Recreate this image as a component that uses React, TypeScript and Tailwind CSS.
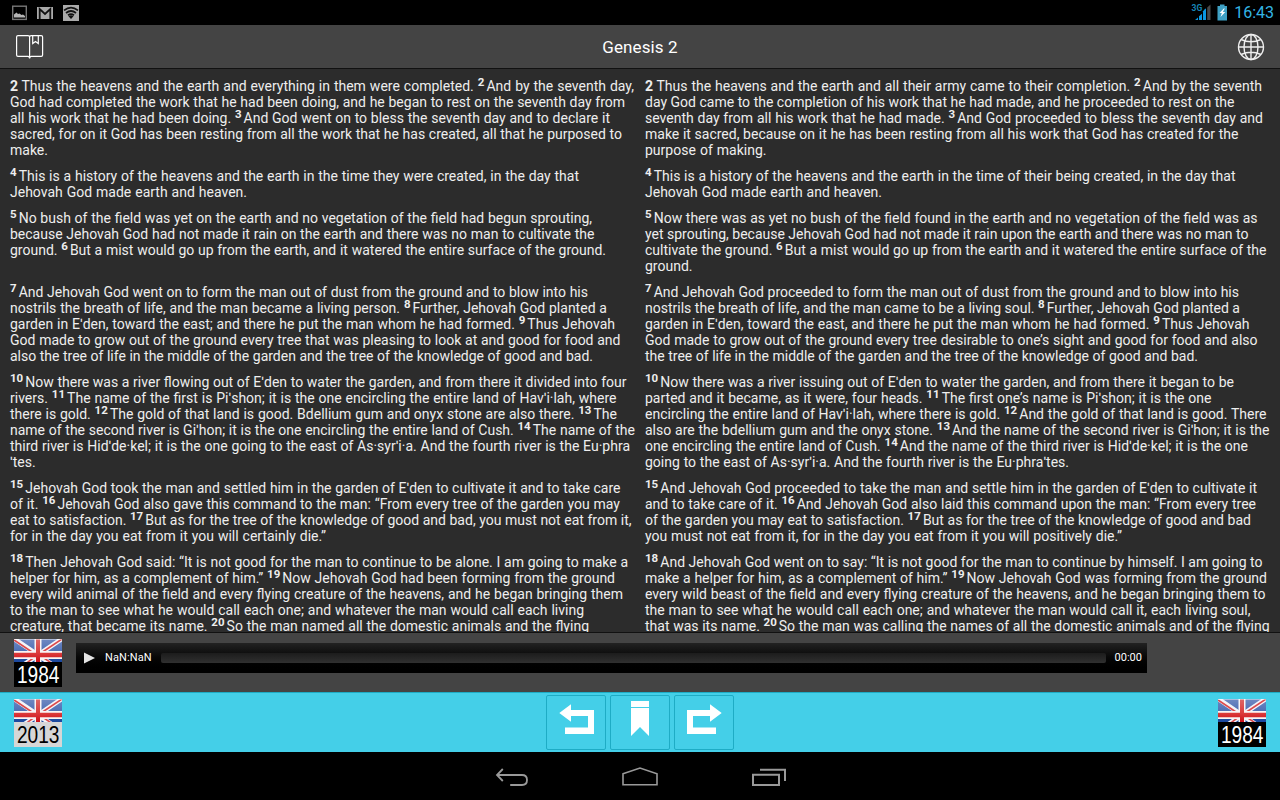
import React, { useLayoutEffect, useRef, useState } from "react";

type TextLine = [string, number];
type Row = [TextLine[], TextLine[]];

// Each line carries its set width in pixels; the spaces stretch to reach it.
const rows: Row[] = [
  [
    [
      ["#2 Thus the heavens and the earth and everything in them were completed. ^2 And by the seventh day,", 624],
      ["God had completed the work that he had been doing, and he began to rest on the seventh day from", 615],
      ["all his work that he had been doing. ^3 And God went on to bless the seventh day and to declare it", 600],
      ["sacred, for on it God has been resting from all the work that he has created, all that he purposed to", 612],
      ["make.", 38.5],
    ],
    [
      ["#2 Thus the heavens and the earth and all their army came to their completion. ^2 And by the seventh", 617],
      ["day God came to the completion of his work that he had made, and he proceeded to rest on the", 589.5],
      ["seventh day from all his work that he had made. ^3 And God proceeded to bless the seventh day and", 618],
      ["make it sacred, because on it he has been resting from all his work that God has created for the", 593.5],
      ["purpose of making.", 121.5],
    ],
  ],
  [
    [
      ["^4 This is a history of the heavens and the earth in the time they were created, in the day that", 569],
      ["Jehovah God made earth and heaven.", 237],
    ],
    [
      ["^4 This is a history of the heavens and the earth in the time of their being created, in the day that", 590.5],
      ["Jehovah God made earth and heaven.", 237],
    ],
  ],
  [
    [
      ["^5 No bush of the field was yet on the earth and no vegetation of the field had begun sprouting,", 582],
      ["because Jehovah God had not made it rain on the earth and there was no man to cultivate the", 584.5],
      ["ground. ^6 But a mist would go up from the earth, and it watered the entire surface of the ground.", 596],
    ],
    [
      ["^5 Now there was as yet no bush of the field found in the earth and no vegetation of the field was as", 612.5],
      ["yet sprouting, because Jehovah God had not made it rain upon the earth and there was no man to", 603.5],
      ["cultivate the ground. ^6 But a mist would go up from the earth and it watered the entire surface of the", 621.5],
      ["ground.", 49],
    ],
  ],
  [
    [
      ["^7 And Jehovah God went on to form the man out of dust from the ground and to blow into his", 578],
      ["nostrils the breath of life, and the man became a living person. ^8 Further, Jehovah God planted a", 597],
      ["garden in Eʹden, toward the east; and there he put the man whom he had formed. ^9 Thus Jehovah", 605],
      ["God made to grow out of the ground every tree that was pleasing to look at and good for food and", 610.5],
      ["also the tree of life in the middle of the garden and the tree of the knowledge of good and bad.", 583],
    ],
    [
      ["^7 And Jehovah God proceeded to form the man out of dust from the ground and to blow into his", 594],
      ["nostrils the breath of life, and the man came to be a living soul. ^8 Further, Jehovah God planted a", 595],
      ["garden in Eʹden, toward the east, and there he put the man whom he had formed. ^9 Thus Jehovah", 604.5],
      ["God made to grow out of the ground every tree desirable to one’s sight and good for food and also", 612.5],
      ["the tree of life in the middle of the garden and the tree of the knowledge of good and bad.", 553],
    ],
  ],
  [
    [
      ["^10 Now there was a river flowing out of Eʹden to water the garden, and from there it divided into four", 616.5],
      ["rivers. ^11 The name of the first is Piʹshon; it is the one encircling the entire land of Havʹi·lah, where", 606.5],
      ["there is gold. ^12 The gold of that land is good. Bdellium gum and onyx stone are also there. ^13 The", 607],
      ["name of the second river is Giʹhon; it is the one encircling the entire land of Cush. ^14 The name of the", 625],
      ["third river is Hidʹde·kel; it is the one going to the east of As·syrʹi·a. And the fourth river is the Eu·phra", 620],
      ["ʹtes.", 26.5],
    ],
    [
      ["^10 Now there was a river issuing out of Eʹden to water the garden, and from there it began to be", 589],
      ["parted and it became, as it were, four heads. ^11 The first one’s name is Piʹshon; it is the one", 566.5],
      ["encircling the entire land of Havʹi·lah, where there is gold. ^12 And the gold of that land is good. There", 621.5],
      ["also are the bdellium gum and the onyx stone. ^13 And the name of the second river is Giʹhon; it is the", 624.5],
      ["one encircling the entire land of Cush. ^14 And the name of the third river is Hidʹde·kel; it is the one", 603],
      ["going to the east of As·syrʹi·a. And the fourth river is the Eu·phraʹtes.", 424],
    ],
  ],
  [
    [
      ["^15 Jehovah God took the man and settled him in the garden of Eʹden to cultivate it and to take care", 610.5],
      ["of it. ^16 Jehovah God also gave this command to the man: “From every tree of the garden you may", 610],
      ["eat to satisfaction. ^17 But as for the tree of the knowledge of good and bad, you must not eat from it,", 621.5],
      ["for in the day you eat from it you will certainly die.”", 316],
    ],
    [
      ["^15 And Jehovah God proceeded to take the man and settle him in the garden of Eʹden to cultivate it", 612],
      ["and to take care of it. ^16 And Jehovah God also laid this command upon the man: “From every tree", 611],
      ["of the garden you may eat to satisfaction. ^17 But as for the tree of the knowledge of good and bad", 606],
      ["you must not eat from it, for in the day you eat from it you will positively die.”", 477],
    ],
  ],
  [
    [
      ["^18 Then Jehovah God said: “It is not good for the man to continue to be alone. I am going to make a", 618],
      ["helper for him, as a complement of him.” ^19 Now Jehovah God had been forming from the ground", 605],
      ["every wild animal of the field and every flying creature of the heavens, and he began bringing them", 613],
      ["to the man to see what he would call each one; and whatever the man would call each living", 574],
      ["creature, that became its name. ^20 So the man named all the domestic animals and the flying", 579],
    ],
    [
      ["^18 And Jehovah God went on to say: “It is not good for the man to continue by himself. I am going to", 617.5],
      ["make a helper for him, as a complement of him.” ^19 Now Jehovah God was forming from the ground", 622],
      ["every wild beast of the field and every flying creature of the heavens, and he began bringing them to", 620.5],
      ["the man to see what he would call each one; and whatever the man would call it, each living soul,", 605.5],
      ["that was its name. ^20 So the man was calling the names of all the domestic animals and of the flying", 624.5],
    ],
  ],
];

function Line({ line: [text, width] }: { line: TextLine }) {
  const ref = useRef<HTMLSpanElement>(null);
  const [gap, setGap] = useState(0);
  const parts = text.split(/([#^]\d+ )/).filter(Boolean);

  useLayoutEffect(() => {
    const spaces = text.replace(/[#^]\d+ /g, "").split(" ").length - 1;
    if (ref.current && spaces > 0) {
      setGap((width - ref.current.getBoundingClientRect().width) / spaces);
    }
  }, [text, width]);

  return (
    <div className="h-4 whitespace-pre">
      <span ref={ref} style={{ wordSpacing: `${gap}px` }}>
        {parts.map((part, i) => {
          if (part[0] === "#") return <b key={i} className="font-bold [word-spacing:0px]">{part.slice(1)}</b>;
          if (part[0] === "^")
            return (
              <sup key={i} className="relative -top-[5px] align-baseline text-[11.5px] leading-none font-bold [word-spacing:-0.8px]">
                {part.slice(1)}
              </sup>
            );
          return <React.Fragment key={i}>{part}</React.Fragment>;
        })}
      </span>
    </div>
  );
}

function Flag({ year, dark }: { year: string; dark?: boolean }) {
  return (
    <div className="flex h-12 w-12 shrink-0 flex-col">
      <svg className="h-[23px] w-12" viewBox="0 0 48 23">
        <defs>
          <linearGradient id="blue" x1="0" y1="0" x2="0" y2="1">
            <stop offset="0" stopColor="#7089c2" />
            <stop offset="0.55" stopColor="#4d6fb5" />
            <stop offset="0.6" stopColor="#214b9f" />
            <stop offset="1" stopColor="#1c499f" />
          </linearGradient>
          <linearGradient id="red" x1="0" y1="0" x2="0" y2="1">
            <stop offset="0" stopColor="#dc6868" />
            <stop offset="0.6" stopColor="#dc3c3c" />
            <stop offset="1" stopColor="#cc1018" />
          </linearGradient>
        </defs>
        <rect width="48" height="23" fill="url(#blue)" />
        <path d="M-1 -1L24 16L49 -1M24 16L10 25.500M24 16L38 25.500" stroke="#f4f4f8" strokeWidth="4.600" fill="none" />
        <path d="M0 1L21 15M48 0L27 14M22 17L12 24.500M27 17L38 24.500" stroke="#dc4a4c" strokeWidth="1.600" fill="none" />
        <path d="M20.500 0h7v12H48v8H27.500V23h-7v-3H0V12h20.500z" fill="#f8f4f4" />
        <path d="M22 0h4v13.700H48v4.600H26V23h-4v-4.700H0v-4.600h22z" fill="url(#red)" />
        <path d="M0 .5H48" stroke="#fff" opacity=".45" />
      </svg>
      <div className={dark ? "h-[25px] bg-black text-white" : "h-[25px] bg-[#d6d6d6] text-black"}>
        <svg className="h-[25px] w-12" viewBox="0 0 48 25">
          <text x="3" y="20.500" textLength="42.500" lengthAdjust="spacingAndGlyphs" fontSize="23" fill="currentColor" fontFamily="Liberation Sans Narrow, Liberation Sans, sans-serif">{year}</text>
        </svg>
      </div>
    </div>
  );
}

const toolButton = "flex h-[55px] w-[60px] rounded-[2px] border border-[#1eacc5]";

export default function App() {
  return (
    <div className="flex h-[800px] w-[1280px] flex-col overflow-hidden bg-black font-[Roboto,sans-serif]">
      <div className="flex h-[25px] shrink-0 items-center justify-between pr-[6px] pl-3">
        <div className="flex items-center">
          <svg width="16" height="16" viewBox="0 0 16 16">
            <rect x=".7" y="1.200" width="13.600" height="13.200" fill="none" stroke="#777" strokeWidth="1.400" />
            <path d="M2 12.500V9.500L4.500 7.500l1.500 1.500 1.500-.5 2 1.500 1.500-.5 2 1.500v1.500z" fill="#b5b5b5" />
          </svg>
          <svg className="ml-[9px]" width="16" height="16" viewBox="0 0 16 16">
            <rect y="2" width="16" height="12" fill="#aaa" />
            <path d="M2.700 14V4L8 9l5.300-5v10" fill="none" stroke="#111" strokeWidth="1.800" />
          </svg>
          <svg className="ml-[10px]" width="16" height="16" viewBox="0 0 16 16">
            <rect width="16" height="16" fill="#aaa" />
            <path d="M1 5.400Q8 0 15 5.400M3 8Q8 4 13 8M5 10.200Q8 8 11 10.200" fill="none" stroke="#111" strokeWidth="1.700" />
            <path d="M5.500 11.200Q8 9.500 10.500 11.200L8 14z" fill="#111" />
          </svg>
        </div>
        <div className="flex items-center">
          <svg className="mr-[6px]" width="20" height="17" viewBox="0 0 20 17">
            <text x="0.500" y="7.300" fontSize="8.500" fontWeight="700" fill="#1784b4" fontFamily="Roboto, sans-serif">3G</text>
            <path d="M4 16l3-2.500V16zM8 12.200l3-2.500V16H8zM12 8.500l1-1V16h-1zM13 6l2-1.500V16h-2z" fill="#0a97e0" />
            <path d="M11.500 7.500L15 4.500V16h-2.700V8z" fill="#0a97e0" />
            <path d="M16.200 3.500L19.500 .5V16h-3.300z" fill="#484848" />
          </svg>
          <svg className="mr-[6px]" width="11" height="17" viewBox="0 0 11 17">
            <path d="M3 .5h4.500V2h2.500v14.500H.5V2H3z" fill="#3fa1c5" />
            <path d="M6.800 4.500L2.500 9h2.300L3.500 13 8.300 8H5.900L7.800 4.500z" fill="#fff" />
          </svg>
          <span className="text-[16px] leading-[25px] text-[#33b5e5]">16:43</span>
        </div>
      </div>

      <header className="grid h-11 shrink-0 grid-cols-3 items-center border-b border-[#111] bg-[#444] px-[15px]">
        <svg width="29" height="25" viewBox="0 0 29 25" fill="none" stroke="#fff" strokeWidth="1.200">
          <path d="M14.600 3Q14.600 1.600 13 1.600H3Q1.600 1.600 1.600 3V21Q1.600 22.400 3 22.400H13Q14.600 22.400 14.600 24.500M14.600 3Q14.600 1.600 16.200 1.600H26.200Q27.600 1.600 27.600 3V21Q27.600 22.400 26.200 22.400H16.200Q14.600 22.400 14.600 24.500M14.600 1.600V24.500M17.700 2V9.500L20.500 7.500L23.300 9.500V2" />
        </svg>
        <h1 className="text-center text-[17px] leading-5 font-normal tracking-[0.1px] text-white">Genesis 2</h1>
        <svg className="justify-self-end" width="28" height="28" viewBox="0 0 28 28" fill="none" stroke="#eee" strokeWidth="1.400">
          <circle cx="14" cy="14" r="12.500" />
          <ellipse cx="14" cy="14" rx="7" ry="12.500" />
          <path d="M14 1.500v25M1.500 14h25M4 6.500Q14 11 24 6.500M4 21.500Q14 17 24 21.500" />
        </svg>
      </header>

      <main className="flex h-[563px] shrink-0 flex-col gap-[10px] overflow-hidden bg-[#2c2c2c] pt-[9px] pl-[10px] text-[14px] leading-4 text-[#eee]">
        {rows.map(([left, right], i) => (
          <div key={i} className="grid shrink-0 grid-cols-[635px_635px]">
            <div>{left.map((l) => <Line key={l[0]} line={l} />)}</div>
            <div>{right.map((l) => <Line key={l[0]} line={l} />)}</div>
          </div>
        ))}
      </main>

      <section className="flex h-[60px] shrink-0 items-start border-t border-[#111] bg-[#444] pt-[6px] pl-[14px]">
        <Flag year="1984" dark />
        <div className="mt-1 ml-[14px] flex h-[30px] w-[1071px] items-center bg-linear-to-b from-[#222] to-black pr-[5px] pl-2 text-[11px] text-white">
          <svg width="11" height="12" viewBox="0 0 11 12">
            <path d="M0 .5L11 6L0 11.500z" fill="#e4e4e4" />
          </svg>
          <span className="ml-[10px] w-[46px] tracking-[0.1px]">NaN:NaN</span>
          <div className="ml-[10px] h-[10px] w-[945px] rounded-[2px] bg-linear-to-b from-[#1c1c1c] to-[#303030]" />
          <span className="ml-auto">00:00</span>
        </div>
      </section>

      <section className="grid h-[60px] shrink-0 grid-cols-[1fr_auto_1fr] border-t border-[#1eacc5] bg-[#44cfe8] px-[14px]">
        <div className="pt-[6px]"><Flag year="2013" /></div>
        <div className="flex gap-1 pt-[2px]">
          <div className={toolButton}>
            <svg width="58" height="53" viewBox="0 0 58 53" fill="#fff">
              <path d="M12.300 17L24 8.300V14H47V38H18V31.500H41V20H24V25.700z" />
            </svg>
          </div>
          <div className={toolButton}>
            <svg width="58" height="53" viewBox="0 0 58 53" fill="#fff">
              <path d="M20 5h18v6H20zM20 12h18V40L29 31L20 40z" />
            </svg>
          </div>
          <div className={toolButton}>
            <svg width="58" height="53" viewBox="0 0 58 53" fill="#fff">
              <path d="M46.700 17L35 8.300V14H12V38H41V31.500H18V20H35V25.700z" />
            </svg>
          </div>
        </div>
        <div className="flex justify-end pt-[6px]"><Flag year="1984" dark /></div>
      </section>

      <nav className="flex h-12 shrink-0 items-center justify-center gap-[92px]">
        <svg width="36" height="24" viewBox="0 0 36 24" fill="none" stroke="#999" strokeWidth="1.800">
          <path d="M8.800 5L3 11L8.800 17M3 11H28Q33 11 33 16T28 21H16.200" />
        </svg>
        <svg width="36" height="24" viewBox="0 0 36 24" fill="none" stroke="#999" strokeWidth="1.600">
          <path d="M1 9.800L18 4L35 9.800V20.800H1z" />
        </svg>
        <svg width="36" height="24" viewBox="0 0 36 24" fill="none" stroke="#999" strokeWidth="2">
          <path d="M3 10.700h26v10.300H3zM10 5.800h25V17" />
        </svg>
      </nav>
    </div>
  );
}
